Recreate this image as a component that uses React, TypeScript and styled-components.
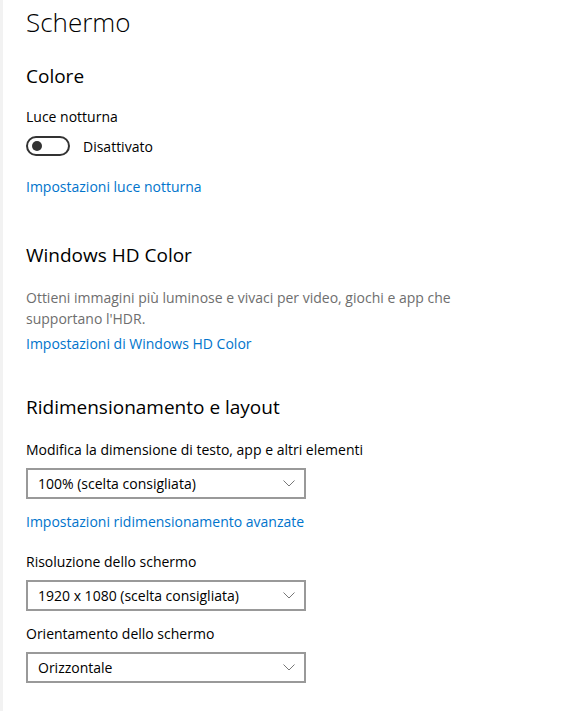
import React from 'react'
import styled, { createGlobalStyle } from 'styled-components'

const GlobalStyle = createGlobalStyle`
  html, body {
    margin: 0;
    padding: 0;
    background: #fff;
  }
  body {
    font-family: "Open Sans", "Noto Sans", sans-serif;
    color: #000;
  }
`

const Page = styled.div`
  width: 561px;
  height: 711px;
  box-sizing: border-box;
  border-left: 3px solid #f2f2f2;
  padding: 2px 0 0 23px;
  overflow: hidden;
`

const PageTitle = styled.h1`
  margin: 0;
  font-size: 26px;
  font-weight: 300;
  line-height: 40px;
`

const SectionTitle = styled.h2<{ gap: number }>`
  margin: ${props => props.gap}px 0 0;
  font-size: 19px;
  font-weight: 400;
  line-height: 28px;
`

const Label = styled.div<{ gap: number }>`
  margin-top: ${props => props.gap}px;
  font-size: 14px;
  line-height: 20px;
`

const Description = styled.p`
  margin: 18px 0 0;
  width: 445px;
  font-size: 14px;
  line-height: 21px;
  color: #6e6e6e;
`

const Link = styled.a<{ gap: number }>`
  display: block;
  margin-top: ${props => props.gap}px;
  font-size: 14px;
  line-height: 20px;
  color: #0074cc;
  text-decoration: none;
`

const ToggleRow = styled.div`
  display: flex;
  align-items: center;
  gap: 13px;
  margin-top: 9px;
  font-size: 14px;
`

const Toggle = styled.div`
  width: 44px;
  height: 20px;
  box-sizing: border-box;
  border: 2px solid #333;
  border-radius: 10px;
  display: flex;
  align-items: center;
  padding-left: 4px;

  &::before {
    content: '';
    width: 10px;
    height: 10px;
    border-radius: 50%;
    background: #333;
  }
`

const Select = styled.div`
  width: 280px;
  height: 31px;
  box-sizing: border-box;
  border: 2px solid #999;
  margin-top: 8px;
  display: flex;
  align-items: center;
  justify-content: space-between;
  padding: 0 9px 0 10px;
  font-size: 14px;
`

const Chevron = () => (
  <svg width="12" height="7" viewBox="0 0 12 7" fill="none">
    <path d="M0.5 0.5 L6 6 L11.5 0.5" stroke="#777" strokeWidth="1" />
  </svg>
)

const Dropdown = ({ value }: { value: string }) => (
  <Select>
    <span>{value}</span>
    <Chevron />
  </Select>
)

const App = () => (
  <>
    <GlobalStyle />
    <Page>
      <PageTitle>Schermo</PageTitle>

      <SectionTitle gap={20}>Colore</SectionTitle>
      <Label gap={17}>Luce notturna</Label>
      <ToggleRow>
        <Toggle />
        <span>Disattivato</span>
      </ToggleRow>
      <Link gap={21}>Impostazioni luce notturna</Link>

      <SectionTitle gap={44}>Windows HD Color</SectionTitle>
      <Description>
        Ottieni immagini più luminose e vivaci per video, giochi e app che supportano l'HDR.
      </Description>
      <Link gap={5}>Impostazioni di Windows HD Color</Link>

      <SectionTitle gap={39}>Ridimensionamento e layout</SectionTitle>
      <Label gap={19}>Modifica la dimensione di testo, app e altri elementi</Label>
      <Dropdown value="100% (scelta consigliata)" />
      <Link gap={13}>Impostazioni ridimensionamento avanzate</Link>

      <Label gap={20}>Risoluzione dello schermo</Label>
      <Dropdown value="1920 x 1080 (scelta consigliata)" />
      <Label gap={13}>Orientamento dello schermo</Label>
      <Dropdown value="Orizzontale" />
    </Page>
  </>
)

export default App
